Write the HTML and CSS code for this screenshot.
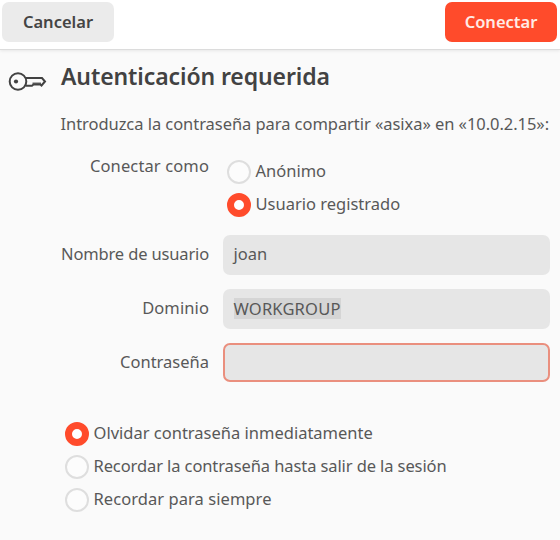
FILE: index.html
```html
<!DOCTYPE html>
<html lang="es">
<head>
<meta charset="utf-8">
<title>Autenticación requerida</title>
<link rel="stylesheet" href="styles.css">
</head>
<body>
<header class="headerbar">
  <button class="button">Cancelar</button>
  <button class="button suggested">Conectar</button>
</header>
<main class="dialog">
  <svg class="key" width="40" height="22" viewBox="0 0 40 22" fill="none" stroke="#424242" stroke-width="2">
    <circle cx="11" cy="11.5" r="8.3"/>
    <circle cx="9" cy="11.5" r="2.1" fill="#424242" stroke="none"/>
    <path d="M18.5 8H35L38 11.5L34.5 15.5L33.3 14.5H26.5L25 15.7H18.5"/>
    <path d="M25.5 13.2H34" stroke-width="1.2"/>
  </svg>
  <div class="content">
    <h1 class="title">Autenticación requerida</h1>
    <p class="message">Introduzca la contraseña para compartir «asixa» en «10.0.2.15»:</p>
    <div class="form">
      <span class="label label-connect">Conectar como</span>
      <div class="options">
        <label class="option"><i class="radio"></i><span>Anónimo</span></label>
        <label class="option"><i class="radio checked"></i><span>Usuario registrado</span></label>
      </div>
      <span class="label label-user">Nombre de usuario</span>
      <div class="entry">joan</div>
      <span class="label label-domain">Dominio</span>
      <div class="entry"><span class="selection">WORKGROUP</span></div>
      <span class="label">Contraseña</span>
      <div class="entry focused"></div>
    </div>
    <div class="options remember">
      <label class="option"><i class="radio checked"></i><span>Olvidar contraseña inmediatamente</span></label>
      <label class="option"><i class="radio"></i><span class="session">Recordar la contraseña hasta salir de la sesión</span></label>
      <label class="option"><i class="radio"></i><span class="forever">Recordar para siempre</span></label>
    </div>
  </div>
</main>
</body>
</html>
```
FILE: styles.css
```css
* { box-sizing: border-box; }
body {
  margin: 0;
  height: 540px;
  overflow: hidden;
  background: #fafafa;
  color: #585858;
  font: 16.5px/22px "Noto Sans", sans-serif;
}
.headerbar {
  display: flex;
  justify-content: space-between;
  align-items: flex-start;
  height: 50px;
  padding: 2px 3px 0 2px;
  background: #fff;
  border-bottom: 1px solid #dcdcdc;
  box-shadow: 0 1px 3px rgba(0, 0, 0, .08);
}
.button {
  width: 112px;
  height: 40px;
  padding: 0;
  border: 0;
  border-radius: 7px;
  background: #ebebeb;
  color: #444;
  font: 600 16.5px/22px "Noto Sans", sans-serif;
}
.suggested { background: #ff4b2b; color: #ffebe6; }
.dialog { display: flex; padding: 11px 10px 0 7px; }
.key { flex: none; width: 40px; margin: 9px 14px 0 0; }
.content { flex: 1; min-width: 0; }
.title {
  margin: 0;
  color: #424242;
  font-size: 23px;
  font-weight: 600;
  line-height: 30px;
  letter-spacing: -.1px;
  white-space: nowrap;
}
.message {
  margin: 22px 0 0 -.5px;
  letter-spacing: -.055px;
  white-space: nowrap;
}
.form {
  display: grid;
  grid-template-columns: 148px 327px;
  grid-template-rows: 61px 40px 40px 40px;
  gap: 14px;
  margin-top: 25px;
}
.label { padding-top: 8px; text-align: right; white-space: nowrap; }
.label-connect { padding-top: 0; margin-top: -5px; letter-spacing: .12px; }
.label-user { letter-spacing: -.15px; }
.label-domain { letter-spacing: .1px; }
.options { display: flex; flex-direction: column; gap: 8.8px; padding-left: 4px; }
.option { display: flex; align-items: center; gap: 4.5px; height: 24px; white-space: nowrap; }
.option span { margin-top: -2px; }
.radio {
  width: 24px;
  height: 24px;
  border: 2px solid #dedede;
  border-radius: 50%;
  background: #fcfcfc;
}
.radio.checked { border: 7px solid #ff4b2b; background: #fff; }
.entry {
  padding: 8px 10.5px;
  border-radius: 7px;
  background: #e6e6e6;
}
.focused { height: 39px; border: 2px solid #ea8f7e; }
.selection { display: inline-block; height: 21px; line-height: 21px; margin-top: 1px; background: #d5d5d5; letter-spacing: .18px; }
.remember { margin-top: 39px; }
.session { letter-spacing: -.1px; }
.forever { letter-spacing: .06px; }
```
